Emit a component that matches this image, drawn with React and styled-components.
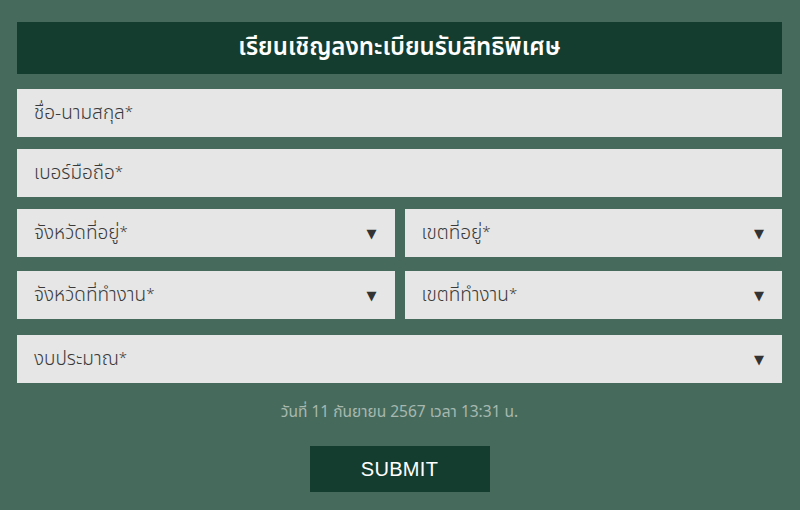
import React from "react";
import styled, { createGlobalStyle } from "styled-components";

const Global = createGlobalStyle`
  html, body { margin: 0; padding: 0; background: #466b5d; }
  body { font-family: "Noto Sans Thai", "Noto Sans", "Liberation Sans", sans-serif; }
  * { box-sizing: border-box; }
`;

const Page = styled.div`
  width: 800px;
  height: 510px;
  background: #466b5d;
  padding: 22px 18px 0 17px;
  display: flex;
  flex-direction: column;
`;

const Header = styled.div`
  height: 52px;
  background: #143d2f;
  color: #fff;
  display: flex;
  align-items: center;
  justify-content: center;
  font-size: 24px;
  font-weight: 600;
`;

const Row = styled.div`
  display: flex;
  gap: 10px;
  margin-top: ${(p) => p.$mt}px;
`;

const Field = styled.div`
  flex: 1;
  height: 48px;
  background: #e6e6e6;
  display: flex;
  align-items: center;
  justify-content: space-between;
  padding: 0 17px 0 17px;
  color: #3a3a3a;
  font-size: 19px;
  font-weight: 300;
`;

const Star = styled.span`
  font-size: 15px;
  vertical-align: 2px;
`;

const Arrow = styled.span`
  font-family: "DejaVu Sans", sans-serif;
  font-size: 13px;
  font-weight: 400;
  color: #333;
  margin-right: 1px;
`;

const DateText = styled.div`
  margin-top: 18px;
  text-align: center;
  color: #a6b8b0;
  font-size: 15.5px;
`;

const Submit = styled.button`
  align-self: center;
  margin-top: 22px;
  width: 180px;
  height: 46px;
  border: none;
  background: #143d2f;
  color: #fff;
  font-family: "Liberation Sans", Arial, sans-serif;
  font-size: 20px;
  font-weight: 400;
  letter-spacing: 0.3px;
`;

const Label = ({ text }) => (
  <span>
    {text}
    <Star>*</Star>
  </span>
);

const Select = ({ label }) => (
  <Field>
    <Label text={label} />
    <Arrow>▼</Arrow>
  </Field>
);

export default function App() {
  return (
    <>
      <Global />
      <Page>
        <Header>เรียนเชิญลงทะเบียนรับสิทธิพิเศษ</Header>
        <Row $mt={15}>
          <Field>
            <Label text="ชื่อ-นามสกุล" />
          </Field>
        </Row>
        <Row $mt={12}>
          <Field>
            <Label text="เบอร์มือถือ" />
          </Field>
        </Row>
        <Row $mt={12}>
          <Select label="จังหวัดที่อยู่" />
          <Select label="เขตที่อยู่" />
        </Row>
        <Row $mt={14}>
          <Select label="จังหวัดที่ทำงาน" />
          <Select label="เขตที่ทำงาน" />
        </Row>
        <Row $mt={16}>
          <Select label="งบประมาณ" />
        </Row>
        <DateText>วันที่ 11 กันยายน 2567 เวลา 13:31 น.</DateText>
        <Submit>SUBMIT</Submit>
      </Page>
    </>
  );
}
